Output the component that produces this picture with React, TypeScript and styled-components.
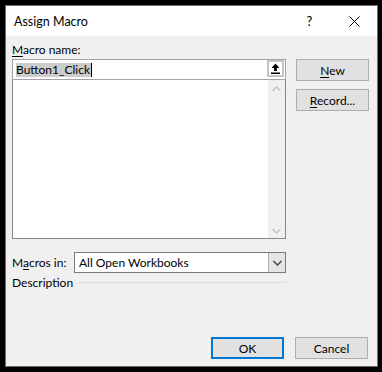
import styled, { createGlobalStyle } from "styled-components";

const Global = createGlobalStyle`
  html, body {
    margin: 0;
    padding: 0;
    background: #000;
  }
  body {
    padding: 5px;
    font-family: Lato, "Noto Sans", Arial, sans-serif;
    font-size: 12px;
    color: #000;
  }
`;

const Window = styled.div`
  width: 373px;
  height: 362px;
  box-sizing: border-box;
  border: 1px solid #6e6e6e;
  background: #f0f0f0;
  display: flex;
  flex-direction: column;
`;

const TitleBar = styled.div`
  height: 30px;
  background: #fff;
  display: flex;
  align-items: center;
`;

const Title = styled.div`
  flex: 1;
  padding-left: 8px;
  font-size: 12.5px;
`;

const Caption = styled.div`
  width: 45px;
  height: 30px;
  display: flex;
  align-items: center;
  justify-content: center;
  font-size: 13px;
`;

const Body = styled.div`
  flex: 1;
  display: flex;
  flex-direction: column;
  padding: 6px 8px 7px 6px;
`;

const Top = styled.div`
  display: grid;
  grid-template-columns: 274px 73px;
  column-gap: 10px;
`;

const LeftCol = styled.div`
  display: flex;
  flex-direction: column;
`;

const RightCol = styled.div`
  display: flex;
  flex-direction: column;
  gap: 8px;
  padding-top: 17px;
`;

const Label = styled.div`
  line-height: 16px;
  height: 17px;
`;

const Key = styled.span`
  text-decoration: underline;
  text-underline-offset: 2px;
`;

const NameInput = styled.div`
  height: 21px;
  box-sizing: border-box;
  border: 1px solid #a3a3a3;
  background: #fff;
  display: flex;
  align-items: center;
  padding-left: 3px;
  position: relative;
`;

const Selected = styled.span`
  background: #cccccc;
  line-height: 14px;
  padding-right: 1px;
  border-right: 1px solid #000;
`;

const CollapseBtn = styled.div`
  position: absolute;
  right: 1px;
  top: 0;
  width: 17px;
  height: 17px;
  box-sizing: border-box;
  border: 2px solid #c4c4c4;
  background: #fff;
  display: flex;
  align-items: center;
  justify-content: center;
`;

const ListBox = styled.div`
  height: 159px;
  box-sizing: border-box;
  border: 1px solid #828790;
  border-top: none;
  background: #fff;
  display: flex;
  justify-content: flex-end;
`;

const ScrollBar = styled.div`
  width: 17px;
  background: #f0f0f0;
  display: flex;
  flex-direction: column;
  justify-content: space-between;
  align-items: center;
  padding: 6px 0 4px;
`;

const MacrosRow = styled.div`
  display: flex;
  align-items: center;
  margin-top: 13px;
  height: 21px;
`;

const RowLabel = styled.div`
  width: 62px;
`;

const Select = styled.div`
  flex: 1;
  height: 21px;
  box-sizing: border-box;
  border: 1px solid #7a7a7a;
  background: #fff;
  display: flex;
  align-items: center;
  padding-left: 4px;
`;

const SelectText = styled.div`
  flex: 1;
`;

const SelectArrow = styled.div`
  width: 17px;
  height: 19px;
  box-sizing: border-box;
  border-left: 1px solid #adadad;
  background: #e5e5e5;
  display: flex;
  align-items: center;
  justify-content: center;
`;

const Group = styled.div`
  display: flex;
  align-items: center;
  gap: 6px;
  height: 18px;
`;

const GroupLine = styled.div`
  flex: 1;
  border-top: 1px solid #dcdcdc;
`;

const Footer = styled.div`
  margin-top: auto;
  display: flex;
  justify-content: flex-end;
  gap: 11px;
  padding-right: 1px;
`;

const Button = styled.div<{ $default?: boolean }>`
  width: 73px;
  height: 22px;
  box-sizing: border-box;
  border: ${(p) => (p.$default ? "2px solid #0078d7" : "1px solid #adadad")};
  background: #e1e1e1;
  display: flex;
  align-items: center;
  justify-content: center;
`;

function Chevron({ up, color }: { up?: boolean; color: string }) {
  return (
    <svg width="9" height="6" viewBox="0 0 9 6">
      <path
        d={up ? "M0.5 5 L4.5 1 L8.5 5" : "M0.5 1 L4.5 5 L8.5 1"}
        fill="none"
        stroke={color}
        strokeWidth="1.4"
      />
    </svg>
  );
}

export default function App() {
  return (
    <>
      <Global />
      <Window>
        <TitleBar>
          <Title>Assign Macro</Title>
          <Caption>?</Caption>
          <Caption>
            <svg width="11" height="11" viewBox="0 0 11 11">
              <path d="M0.5 0.5 L10.5 10.5 M10.5 0.5 L0.5 10.5" stroke="#000" strokeWidth="1" />
            </svg>
          </Caption>
        </TitleBar>
        <Body>
          <Top>
            <LeftCol>
              <Label>
                <Key>M</Key>acro name:
              </Label>
              <NameInput>
                <Selected>Button1_Click</Selected>
                <CollapseBtn>
                  <svg width="9" height="11" viewBox="0 0 9 11">
                    <path d="M4.5 0.5 L8.5 5 L6 5 L6 8 L3 8 L3 5 L0.5 5 Z" fill="#000" />
                    <rect x="0" y="9.5" width="9" height="1.5" fill="#000" />
                  </svg>
                </CollapseBtn>
              </NameInput>
              <ListBox>
                <ScrollBar>
                  <Chevron up color="#c2c2c2" />
                  <Chevron color="#c2c2c2" />
                </ScrollBar>
              </ListBox>
              <MacrosRow>
                <RowLabel>
                  M<Key>a</Key>cros in:
                </RowLabel>
                <Select>
                  <SelectText>All Open Workbooks</SelectText>
                  <SelectArrow>
                    <Chevron color="#404040" />
                  </SelectArrow>
                </Select>
              </MacrosRow>
              <Group>
                <span>Description</span>
                <GroupLine />
              </Group>
            </LeftCol>
            <RightCol>
              <Button>
                <span>
                  <Key>N</Key>ew
                </span>
              </Button>
              <Button>
                <span>
                  <Key>R</Key>ecord...
                </span>
              </Button>
            </RightCol>
          </Top>
          <Footer>
            <Button $default>OK</Button>
            <Button>Cancel</Button>
          </Footer>
        </Body>
      </Window>
    </>
  );
}
